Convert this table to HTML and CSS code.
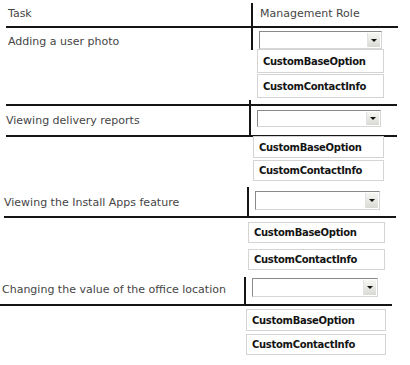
FILE: index.html
```html
<!DOCTYPE html>
<html>
<head>
<meta charset="utf-8">
<link rel="stylesheet" href="styles.css">
</head>
<body>
<div class="page">
  <section class="q q1">
    <div class="row head">
      <div class="task">Task</div>
      <div class="role">Management Role</div>
    </div>
    <div class="row body">
      <div class="task">Adding a user photo</div>
      <div class="role"><div class="select"><span class="btn"><span class="tri"></span></span></div></div>
    </div>
    <ul class="opts">
      <li>CustomBaseOption</li>
      <li>CustomContactInfo</li>
    </ul>
  </section>
  <section class="q q2">
    <div class="row body">
      <div class="task">Viewing delivery reports</div>
      <div class="role"><div class="select"><span class="btn"><span class="tri"></span></span></div></div>
    </div>
    <ul class="opts">
      <li>CustomBaseOption</li>
      <li>CustomContactInfo</li>
    </ul>
  </section>
  <section class="q q3">
    <div class="row body">
      <div class="task">Viewing the Install Apps feature</div>
      <div class="role"><div class="select"><span class="btn"><span class="tri"></span></span></div></div>
    </div>
    <ul class="opts">
      <li>CustomBaseOption</li>
      <li>CustomContactInfo</li>
    </ul>
  </section>
  <section class="q q4">
    <div class="row body">
      <div class="task">Changing the value of the office location</div>
      <div class="role"><div class="select"><span class="btn"><span class="tri"></span></span></div></div>
    </div>
    <ul class="opts">
      <li>CustomBaseOption</li>
      <li>CustomContactInfo</li>
    </ul>
  </section>
</div>
</body>
</html>
```
FILE: styles.css
```css
html, body {
  margin: 0;
  padding: 0;
  background: #fff;
}
body {
  font-family: "DejaVu Sans", Verdana, sans-serif;
  font-size: 11px;
  line-height: 13px;
  color: #454545;
}
.page {
  width: 410px;
  height: 365px;
  overflow: hidden;
}
.q {
  display: flex;
  flex-direction: column;
}
.row {
  display: grid;
  box-sizing: border-box;
}
.role {
  border-left: 2px solid #151515;
}
.select {
  box-sizing: border-box;
  background: #fff;
  border: 1px solid;
  border-color: #8a8a8a #d6d6d6 #d6d6d6 #8a8a8a;
  display: flex;
  justify-content: flex-end;
  padding: 1px;
}
.btn {
  width: 12px;
  background: linear-gradient(#f6f6f4, #d9d9d4);
  border-left: 1px solid #e2e2e2;
  display: flex;
  align-items: center;
  justify-content: center;
}
.tri {
  width: 0;
  height: 0;
  border-left: 3px solid transparent;
  border-right: 3px solid transparent;
  border-top: 3px solid #111;
}
.opts {
  list-style: none;
  margin: 0;
  padding: 0;
  display: flex;
  flex-direction: column;
}
.opts li {
  box-sizing: border-box;
  border: 1px solid #d4d4d4;
  font-size: 10px;
  letter-spacing: -0.3px;
  font-weight: bold;
  color: #141414;
  padding-left: 5px;
  display: flex;
  align-items: center;
}

/* section 1 */
.q1 .head {
  margin: 3px 0 0 6px;
  width: 392px;
  height: 25px;
  grid-template-columns: 245px 1fr;
  border-bottom: 2px solid #151515;
}
.q1 .head .task { padding: 4px 0 0 2px; }
.q1 .head .role { padding: 4px 0 0 7px; }
.q1 .body {
  margin-left: 6px;
  width: 392px;
  height: 22px;
  grid-template-columns: 245px 1fr;
}
.q1 .body .task { padding: 7px 0 0 2px; }
.q1 .body .role { padding: 3px 0 0 6px; }
.q1 .select { width: 123px; height: 18px; }
.q1 .opts { margin: -1px 0 0 257px; width: 127px; gap: 1px; }
.q1 .opts li { height: 24px; }

/* section 2 */
.q2 .body {
  margin: 6px 0 0 6px;
  width: 391px;
  height: 33px;
  grid-template-columns: 243px 1fr;
  border-top: 2px solid #151515;
  border-bottom: 2px solid #151515;
}
.q2 .body .task { padding: 8px 0 0 0; }
.q2 .body .role { margin-top: -6px; padding: 10px 0 0 6px; }
.q2 .select { width: 124px; height: 17px; }
.q2 .opts { margin: -1px 0 0 253px; width: 131px; gap: 2px; }
.q2 .opts li { height: 22px; }
.q2 .opts li + li { height: 21px; }

/* section 3 */
.q3 .body {
  margin: 6px 0 0 4px;
  width: 392px;
  height: 31px;
  grid-template-columns: 243px 1fr;
  border-bottom: 2px solid #151515;
}
.q3 .body .task { padding: 9px 0 0 0; }
.q3 .body .role { padding: 4px 0 0 6px; }
.q3 .select { width: 125px; height: 19px; }
.q3 .opts { margin: 4px 0 0 248px; width: 137px; gap: 6px; }
.q3 .opts li { height: 21px; }

/* section 4 */
.q4 .body {
  margin: 7px 0 0 0;
  width: 392px;
  height: 29px;
  grid-template-columns: 244px 1fr;
  border-bottom: 2px solid #151515;
}
.q4 .body .task { padding: 6px 0 0 2px; }
.q4 .body .role { padding: 1px 0 0 6px; }
.q4 .select { width: 126px; height: 19px; }
.q4 .opts { margin: 3px 0 0 246px; width: 140px; gap: 3px; }
.q4 .opts li { height: 22px; }
.q4 .opts li + li { height: 21px; }
```
